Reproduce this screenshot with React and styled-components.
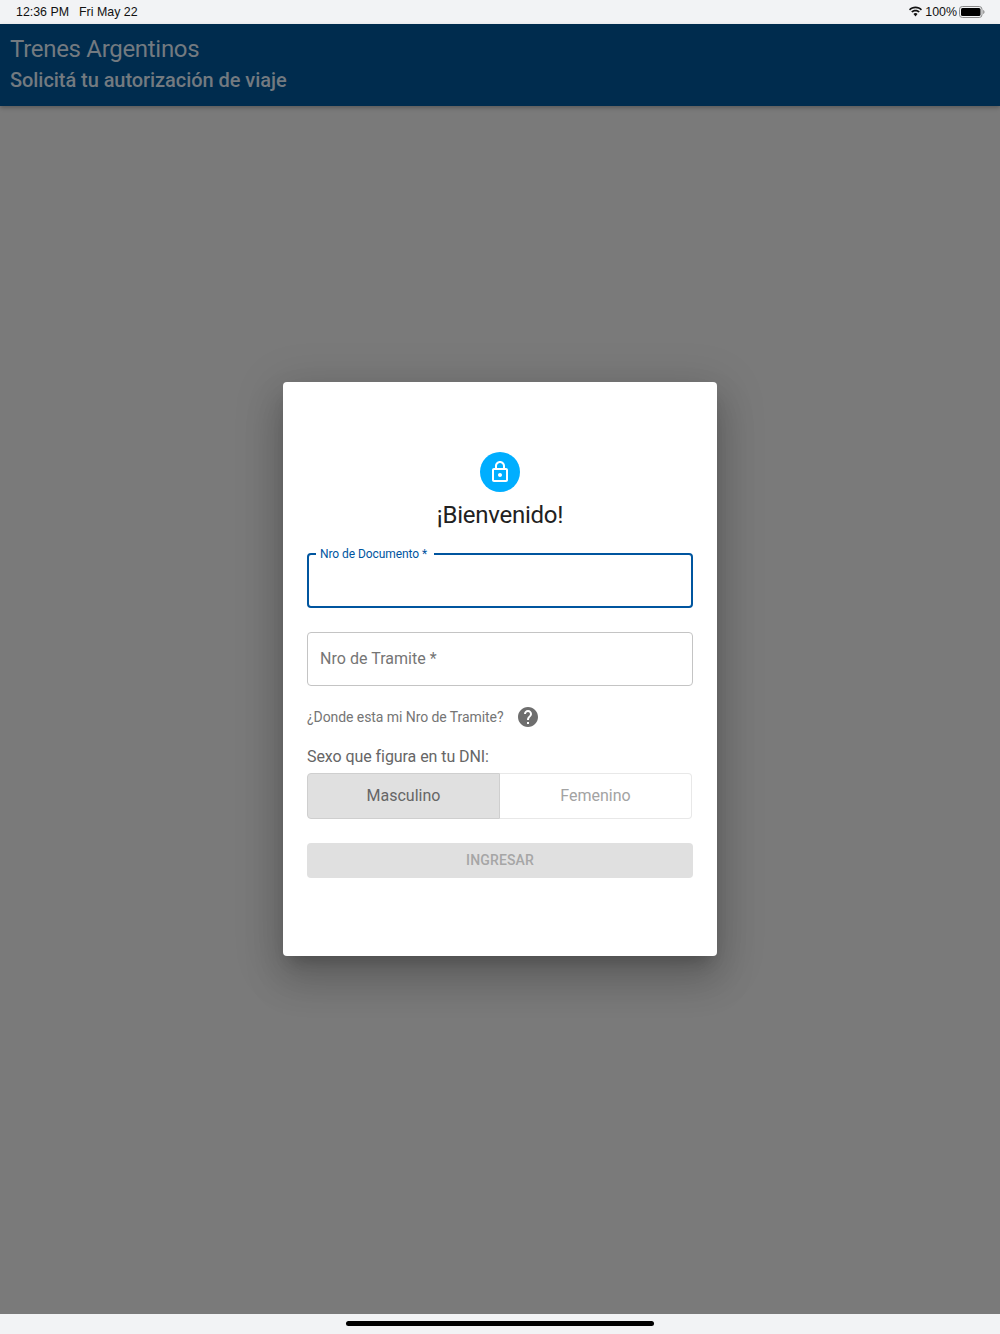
import React from "react";
import styled, { createGlobalStyle } from "styled-components";

const Global = createGlobalStyle`
  html, body { margin: 0; padding: 0; }
  body { font-family: Roboto, "Liberation Sans", sans-serif; }
  * { box-sizing: border-box; }
`;

const Page = styled.div`
  width: 1000px;
  height: 1334px;
  display: flex;
  flex-direction: column;
  background: #7a7a7a;
  overflow: hidden;
`;

const StatusBar = styled.div`
  height: 24px;
  flex: none;
  background: #f2f3f5;
  display: flex;
  align-items: center;
  justify-content: space-between;
  padding: 0 15px 1px 16px;
  font-family: "Liberation Sans", sans-serif;
  font-size: 12.4px;
  color: #111;
`;

const StatusGroup = styled.div`
  display: flex;
  align-items: center;
  gap: ${(p) => p.$gap}px;
`;

const AppBar = styled.header`
  height: 82px;
  flex: none;
  background: #002c4e;
  padding: 10px 10px 0;
  color: #737a80;
  position: relative;
  box-shadow: 0 2px 4px rgba(0, 0, 0, 0.25);
`;

const AppTitle = styled.div`
  font-size: 24px;
  line-height: 30px;
  letter-spacing: -0.3px;
`;

const AppSubtitle = styled.div`
  font-size: 20px;
  font-weight: 500;
  line-height: 28px;
  margin-top: 2px;
  letter-spacing: -0.06px;
`;

const Backdrop = styled.main`
  flex: 1;
  display: flex;
  align-items: center;
  justify-content: center;
  padding-bottom: 82px;
`;

const Dialog = styled.section`
  width: 434px;
  height: 574px;
  background: #fff;
  border-radius: 4px;
  padding: 70px 24px 0;
  display: flex;
  flex-direction: column;
  box-shadow: 0 11px 15px -7px rgba(0, 0, 0, 0.2), 0 24px 38px 3px rgba(0, 0, 0, 0.14),
    0 9px 46px 8px rgba(0, 0, 0, 0.12);
`;

const Avatar = styled.div`
  width: 40px;
  height: 40px;
  border-radius: 50%;
  background: #00aeff;
  align-self: center;
  display: flex;
  align-items: center;
  justify-content: center;
  color: #fff;
`;

const Title = styled.h1`
  margin: 7px 0 -1px;
  font-size: 24px;
  font-weight: 400;
  line-height: 32px;
  color: #212121;
  text-align: center;
  letter-spacing: -0.25px;
`;

const Field = styled.div`
  position: relative;
  height: ${(p) => (p.$focused ? 55 : 54)}px;
  margin-top: ${(p) => (p.$focused ? 23 : 24)}px;
  border-radius: 4px;
  border: ${(p) => (p.$focused ? "2px solid #00559f" : "1px solid #c4c4c4")};
  display: flex;
  align-items: center;
  padding: 0 0 1px 12px;
  font-size: 16px;
  color: #757575;
  letter-spacing: 0.03px;
`;

const FloatingLabel = styled.span`
  position: absolute;
  left: 7px;
  top: -8px;
  padding: 0 7px 0 4px;
  background: #fff;
  font-size: 12px;
  line-height: 14px;
  color: #00559f;
  letter-spacing: -0.07px;
`;

const HelpRow = styled.div`
  margin-top: 19px;
  display: flex;
  align-items: center;
  gap: 12px;
  font-size: 14px;
  line-height: 24px;
  color: #757575;
  letter-spacing: -0.07px;
`;

const SexLabel = styled.div`
  margin-top: 18px;
  font-size: 16px;
  line-height: 19px;
  color: #666;
  letter-spacing: -0.07px;
`;

const Toggle = styled.div`
  display: flex;
  width: 385px;
  height: 46px;
  margin-top: 7px;
`;

const ToggleOption = styled.div`
  flex: 1;
  display: flex;
  align-items: center;
  justify-content: center;
  padding-bottom: 2px;
  font-size: 16px;
  letter-spacing: 0;
  background: ${(p) => (p.$selected ? "#e0e0e0" : "#fff")};
  color: ${(p) => (p.$selected ? "#666" : "#a3a3a3")};
  border: 1px solid ${(p) => (p.$selected ? "#cfcfcf" : "#e8e8e8")};
  border-radius: ${(p) => (p.$selected ? "4px 0 0 4px" : "0 4px 4px 0")};
  ${(p) => (p.$selected ? "" : "border-left: none;")}
`;

const SubmitButton = styled.button`
  margin-top: 24px;
  height: 35px;
  border: none;
  border-radius: 4px;
  background: #e0e0e0;
  color: #a6a6a6;
  font-family: inherit;
  font-size: 14px;
  font-weight: 500;
  letter-spacing: 0.15px;
  padding: 0 0 2px;
`;

const HomeArea = styled.div`
  height: 20px;
  flex: none;
  background: #f2f3f5;
  display: flex;
  justify-content: center;
  padding-top: 7px;
`;

const HomeIndicator = styled.div`
  width: 308px;
  height: 5px;
  border-radius: 3px;
  background: #000;
`;

const Wifi = () => (
  <svg width="15" height="11" viewBox="0 0 15 11" aria-hidden="true">
    <path d="M7.5 2.2c2.1 0 4 .8 5.4 2.2l1.1-1.2C12.3 1.5 10 .5 7.5.5S2.7 1.5 1 3.2l1.1 1.2C3.5 3 5.4 2.2 7.5 2.2z" fill="#111" />
    <path d="M7.5 5.4c1.2 0 2.3.5 3.1 1.2l1.2-1.2C10.7 4.3 9.2 3.7 7.5 3.7s-3.2.6-4.3 1.7l1.2 1.2c.8-.7 1.9-1.2 3.1-1.2z" fill="#111" />
    <path d="M7.5 7.1c-.8 0-1.5.3-2 .8l2 2.6 2-2.6c-.5-.5-1.2-.8-2-.8z" fill="#111" />
  </svg>
);

const Battery = () => (
  <svg width="26" height="12" viewBox="0 0 26 12" aria-hidden="true">
    <rect x="0.5" y="0.5" width="22.5" height="11" rx="2.8" fill="none" stroke="#8a8a8a" />
    <rect x="2" y="2" width="19.5" height="8" rx="1.5" fill="#000" />
    <path d="M24.2 4v4c.8-.2 1.3-1 1.3-2s-.5-1.8-1.3-2z" fill="#8a8a8a" />
  </svg>
);

const LockIcon = () => (
  <svg width="24" height="24" viewBox="0 0 24 24" fill="currentColor" aria-hidden="true">
    <path d="M18 8h-1V6c0-2.76-2.24-5-5-5S7 3.24 7 6v2H6c-1.1 0-2 .9-2 2v10c0 1.1.9 2 2 2h12c1.1 0 2-.9 2-2V10c0-1.1-.9-2-2-2zM9 6c0-1.66 1.34-3 3-3s3 1.34 3 3v2H9V6zm9 14H6V10h12v10zm-6-3c1.1 0 2-.9 2-2s-.9-2-2-2-2 .9-2 2 .9 2 2 2z" />
  </svg>
);

const HelpIcon = () => (
  <svg width="24" height="24" viewBox="0 0 24 24" fill="#6e6e6e" aria-hidden="true">
    <path d="M12 2C6.48 2 2 6.48 2 12s4.48 10 10 10 10-4.48 10-10S17.52 2 12 2zm1 17h-2v-2h2v2zm2.07-7.75l-.9.92C13.45 12.9 13 13.5 13 15h-2v-.5c0-1.1.45-2.1 1.17-2.83l1.24-1.26c.37-.36.59-.86.59-1.41 0-1.1-.9-2-2-2s-2 .9-2 2H8c0-2.21 1.79-4 4-4s4 1.79 4 4c0 .88-.36 1.68-.93 2.25z" />
  </svg>
);

export default function App() {
  return (
    <>
      <Global />
      <Page>
        <StatusBar>
          <StatusGroup $gap={10}>
            <span>12:36 PM</span>
            <span>Fri May 22</span>
          </StatusGroup>
          <StatusGroup $gap={2}>
            <Wifi />
            <span>100%</span>
            <Battery />
          </StatusGroup>
        </StatusBar>
        <AppBar>
          <AppTitle>Trenes Argentinos</AppTitle>
          <AppSubtitle>Solicitá tu autorización de viaje</AppSubtitle>
        </AppBar>
        <Backdrop>
          <Dialog>
            <Avatar>
              <LockIcon />
            </Avatar>
            <Title>¡Bienvenido!</Title>
            <Field $focused>
              <FloatingLabel>Nro de Documento *</FloatingLabel>
            </Field>
            <Field>Nro de Tramite *</Field>
            <HelpRow>
              <span>¿Donde esta mi Nro de Tramite?</span>
              <HelpIcon />
            </HelpRow>
            <SexLabel>Sexo que figura en tu DNI:</SexLabel>
            <Toggle>
              <ToggleOption $selected>Masculino</ToggleOption>
              <ToggleOption>Femenino</ToggleOption>
            </Toggle>
            <SubmitButton disabled>INGRESAR</SubmitButton>
          </Dialog>
        </Backdrop>
        <HomeArea>
          <HomeIndicator />
        </HomeArea>
      </Page>
    </>
  );
}
